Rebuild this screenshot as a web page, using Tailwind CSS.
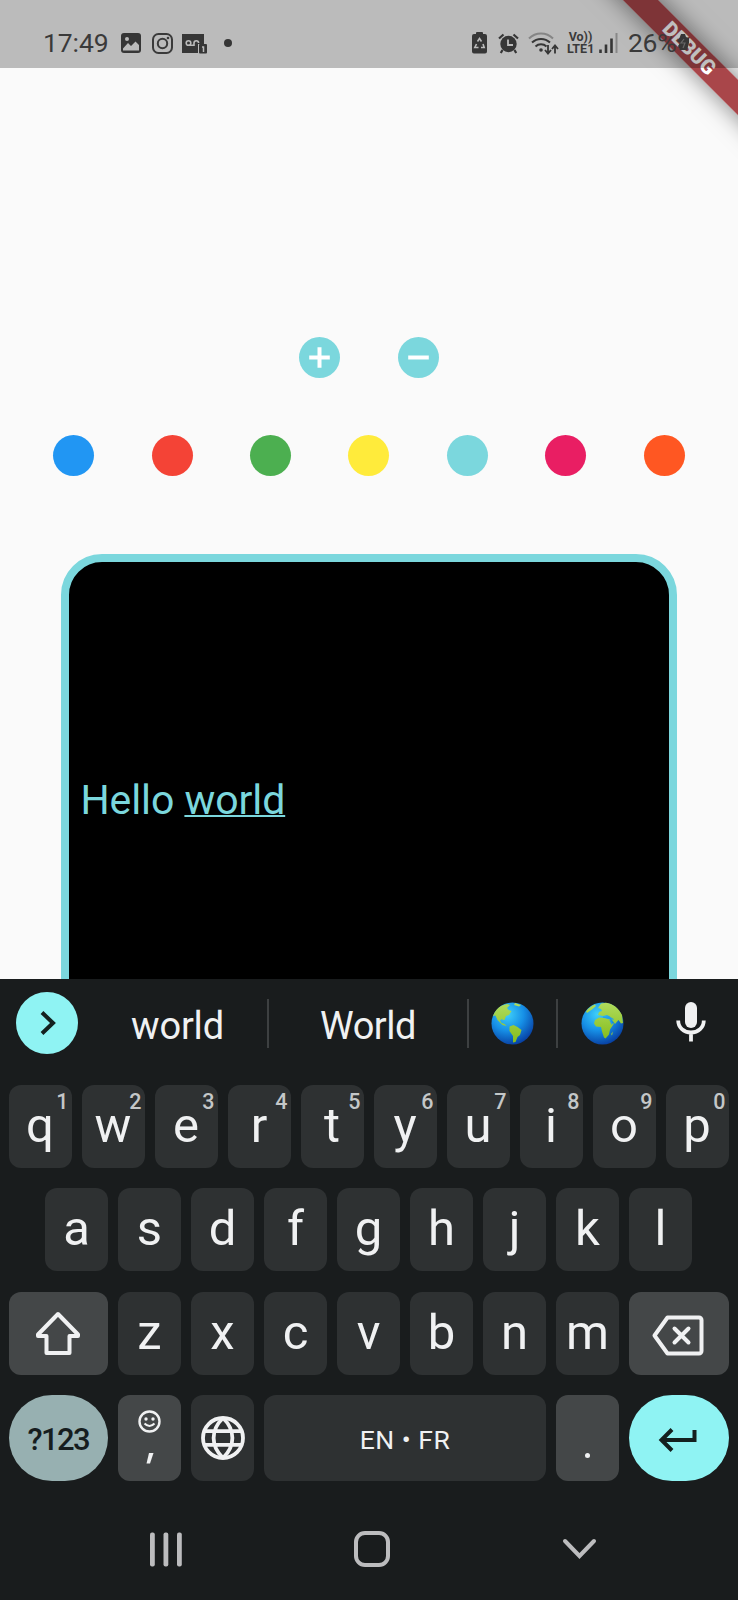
<!DOCTYPE html>
<html lang="en">
<head>
<meta charset="utf-8">
<title>Text editor</title>
<script src="https://cdn.jsdelivr.net/npm/@tailwindcss/browser@4"></script>
</head>
<body class="bg-[#fafafa] font-['Roboto',sans-serif]">
<div class="relative flex h-[1600px] w-[738px] flex-col overflow-hidden bg-[#fafafa]">

  <!-- Debug ribbon -->
  <div class="absolute top-0 right-0 h-[240px] w-[240px] overflow-hidden">
    <div class="absolute top-[36px] left-[61px] flex h-[25px] w-[260px] rotate-45 items-center justify-center bg-[#a03236]/90 text-[20.5px] leading-none font-black text-white shadow-[0_0_24px_rgba(0,0,0,0.5)]">DEBUG</div>
  </div>

  <!-- Status bar -->
  <header class="relative z-10 flex h-[68px] shrink-0 items-center bg-black/25 pt-[18px] pl-[43px] text-[#3a3a3a]">
    <span class="w-[78px] text-[26.5px] leading-[30px] tracking-[-0.1px]">17:49</span>
    <svg class="h-5 w-5" viewBox="0 0 20 20"><rect width="20" height="20" rx="3" fill="#363636"/><circle cx="6" cy="6" r="2" fill="#bbb"/><path d="M2 15.500 7 10l3 3 4.500-4.500L18 12v5.500H2z" fill="#bbb"/></svg>
    <svg class="ml-[11px] h-[21px] w-[21px]" viewBox="0 0 21 21" fill="none" stroke="#3a3a3a" stroke-width="2"><rect x="1" y="1" width="19" height="19" rx="5.500"/><circle cx="10.500" cy="10.500" r="4.700"/><circle cx="16" cy="5" r="1.300" fill="#3a3a3a" stroke="none"/></svg>
    <svg class="ml-[9px] h-[21px] w-[26px]" viewBox="0 0 26 21"><path d="M0 1h22v10h-6v9H0z" fill="#363636"/><g fill="none" stroke="#bbb" stroke-width="1.600"><circle cx="6.500" cy="10" r="2.300"/><path d="M6.500 12.300h5.500V10a2.300 2.300 0 0 1 4.600 0"/></g><rect x="17" y="11" width="8" height="9.500" rx="1" fill="#363636"/><path d="M20 14h1.500v5" fill="none" stroke="#bbb" stroke-width="1.500"/></svg>
    <span class="ml-[16px] h-2 w-2 rounded-full bg-[#363636]"></span>

    <svg class="ml-[240px] h-[22px] w-[15px]" viewBox="0 0 15 22"><path d="M5 0h5q1 0 1 1v1h2a2 2 0 0 1 2 2v15.500a2 2 0 0 1-2 2H2a2 2 0 0 1-2-2V4a2 2 0 0 1 2-2h2V1q0-1 1-1z" fill="#363636"/><path d="M5.500 9.500 7.500 6.500l2 3M11 12l1.200 3.500H9M6.500 15.500H2.800L4.500 12" fill="none" stroke="#bbb" stroke-width="1.600"/></svg>
    <svg class="ml-[11px] h-[21px] w-[21px]" viewBox="0 0 21 21"><circle cx="10.500" cy="11" r="8.200" fill="#363636"/><path d="M1 5.500 5.500 1.500M20 5.500 15.500 1.500M4.500 17 2.800 20M16.500 17l1.700 3" stroke="#363636" stroke-width="2.200"/><path d="M10 6.500V12h5" fill="none" stroke="#bbb" stroke-width="1.800"/></svg>
    <svg class="ml-[9px] h-[23px] w-[31px]" viewBox="0 0 31 23" fill="none" stroke="#363636" stroke-width="2"><path d="M1 6.500a17 17 0 0 1 24 0" stroke="#858585"/><path d="M4 10.500a13 13 0 0 1 18 0M7.500 14.500a8 8 0 0 1 11 0"/><circle cx="13" cy="18" r="1.800" fill="#363636" stroke="none"/><path d="M20 13v8M17 18l3 3.500 3-3.500M27 21.500v-8M24 17l3-3.500 3 3.500" stroke-width="1.800"/></svg>
    <div class="ml-[8px] w-[27px] text-center text-[12.500px] leading-[12px] font-bold whitespace-nowrap"><div>Vo))</div><div>LTE1</div></div>
    <svg class="ml-[5px] h-5 w-[19px]" viewBox="0 0 19 20"><path d="M1.500 16.500V20M7 11.500V20M12.500 5.500V20" stroke="#363636" stroke-width="2.600"/><path d="M17.500 0v20" stroke="#888" stroke-width="2"/></svg>
    <span class="ml-[10px] text-[26.500px] leading-[30px] tracking-[-0.3px]">26%</span>
    <svg class="ml-[1px] h-[18px] w-3" viewBox="0 0 12 18"><path d="M4 0h4l1 3 3 1v5l-2 7H3L1 12l2-3-3-2 3-4z" fill="#363636"/><path d="M7 5 4 9h4l-2 5" fill="none" stroke="#666" stroke-width="1.200"/></svg>
  </header>

  <!-- Editor -->
  <main class="flex h-[910.500px] shrink-0 flex-col overflow-hidden pt-[240px]">
    <div class="flex h-[98.500px] shrink-0 justify-center">
      <div class="flex w-[98.400px] items-center justify-center"><svg class="h-[41px] w-[41px]" viewBox="0 0 41 41"><circle cx="20.500" cy="20.500" r="20.500" fill="#7bd7dd"/><path d="M10.200 20.500h20.600M20.500 10.200v20.600" stroke="#fff" stroke-width="4"/></svg></div>
      <div class="flex w-[98.400px] items-center justify-center"><svg class="h-[41px] w-[41px]" viewBox="0 0 41 41"><circle cx="20.500" cy="20.500" r="20.500" fill="#7bd7dd"/><path d="M10.200 20.500h20.600" stroke="#fff" stroke-width="4"/></svg></div>
    </div>
    <div class="grid h-[98.500px] shrink-0 grid-cols-7 place-items-center px-[24.600px]">
      <span class="h-[41px] w-[41px] rounded-full bg-[#2196f3]"></span>
      <span class="h-[41px] w-[41px] rounded-full bg-[#f44336]"></span>
      <span class="h-[41px] w-[41px] rounded-full bg-[#4caf50]"></span>
      <span class="h-[41px] w-[41px] rounded-full bg-[#ffeb3b]"></span>
      <span class="h-[41px] w-[41px] rounded-full bg-[#7bd7dd]"></span>
      <span class="h-[41px] w-[41px] rounded-full bg-[#e91e63]"></span>
      <span class="h-[41px] w-[41px] rounded-full bg-[#ff5722]"></span>
    </div>
    <div class="mx-[61.400px] mt-[49px] h-[500px] shrink-0 rounded-[41px] border-8 border-[#7bd7dd] bg-black pt-[214px] pl-[11px] text-[41px] leading-[48px] tracking-[-0.080px] text-[#7bd7dd]">Hello <span class="underline decoration-2 underline-offset-[1px] [text-decoration-skip-ink:none]">world</span></div>
  </main>

  <!-- Keyboard -->
  <section class="flex grow flex-col bg-[#191c1d] text-[#f0f1f2]">
    <div class="flex h-[106.500px] shrink-0 items-center pb-[17px] pl-4">
      <div class="flex h-[62px] w-[62px] items-center justify-center rounded-full bg-[#8ff3f3]"><svg class="ml-[1px] h-6 w-4" viewBox="0 0 16 24" fill="none" stroke="#14201f" stroke-width="4"><path d="M2 1.500 13 12 2 22.500"/></svg></div>
      <div class="w-[189px] pt-[5px] pl-[10px] text-center text-[38px] leading-[44px] tracking-[-0.200px]">world</div>
      <div class="h-[49px] w-[2px] bg-[#3d4041]"></div>
      <div class="w-[198px] pt-[5px] text-center text-[38px] leading-[44px] tracking-[-0.500px]">World</div>
      <div class="h-[49px] w-[2px] bg-[#3d4041]"></div>
      <div class="flex w-[87px] justify-center">
        <svg class="h-[43px] w-[43px]" viewBox="0 0 43 43">
          <defs><radialGradient id="sea" cx=".38" cy=".28" r=".78"><stop offset="0" stop-color="#3fd0fa"/><stop offset=".5" stop-color="#168fe6"/><stop offset="1" stop-color="#06389c"/></radialGradient><linearGradient id="land" x2="0" y2="1"><stop offset="0" stop-color="#b0dc5c"/><stop offset="1" stop-color="#86bd1e"/></linearGradient></defs>
          <circle cx="21.500" cy="21.500" r="21" fill="url(#sea)"/>
          <path d="M2 14C3.500 9.500 7 5.500 11 3.500l5-1.500 3 1-3 3 1.500 2 3 1-2.500 4-3 1-1.500 4h-1.500l-1-1-2 1.500 1.500 2.500 3 1 2 2-4-1-5-5-2-4.500zM24 1l6 2-2 1.500-5-1.500zM18.500 24.500l4-1.500 4 2 4 3-1.500 5-2.500 2-2 5-2.500.5V34l-3.500-5z" fill="url(#land)"/>
        </svg>
      </div>
      <div class="h-[49px] w-[2px] bg-[#3d4041]"></div>
      <div class="flex w-[89px] justify-center">
        <svg class="h-[43px] w-[43px]" viewBox="0 0 43 43">
          <circle cx="21.500" cy="21.500" r="21" fill="url(#sea)"/>
          <path d="M5 9.500C7 6.500 10 4 14 2.500l1 1.500-4 3.500-5 3.500zM17 13l1-3 3-1-1-2-3-1 3-4.500L25 .800c7 1 12.500 5 16 12.200l1 8-2 .5-2.500-3.500-3.500 4-3-4-2-3.500-3-1.500-4 1zM14 18l4-2.500 5 .5 6 1.500 1.500 4h2.500l-4 6-1 5-3.500 4-1.500-1-2-6-1-4.500-5-.5-2-3z" fill="url(#land)"/><path d="M22 15.200l8 .800 2.500 1.500M29 18l2 4.500" stroke="#24a0ea" stroke-width="1.200" fill="none"/><path d="M32 29.500l-1 4-1-1.500z" fill="#8bc34a"/>
        </svg>
      </div>
      <div class="flex w-[87px] justify-center"><svg class="-mt-[2px] h-10 w-[30px]" viewBox="0 0 30 40"><rect x="9" width="12" height="26" rx="6" fill="#f0f1f2"/><path d="M2.200 18.500c0 7 5.500 12 12.800 12s12.800-5 12.800-12M15 30v9.500" fill="none" stroke="#f0f1f2" stroke-width="3.800"/></svg></div>
    </div>

    <div class="flex flex-col gap-[20.400px] pr-[9.500px] pl-[8.500px] text-center text-[49px] leading-[81px]">
      <div class="flex h-[83px] gap-[10px]">
        <div class="relative flex-1 rounded-[12px] bg-[#2e3132]">q<sup class="absolute top-[6px] right-[3px] text-[21.500px] leading-[22px] font-medium text-[#c4c7c8]">1</sup></div>
        <div class="relative flex-1 rounded-[12px] bg-[#2e3132]">w<sup class="absolute top-[6px] right-[3px] text-[21.500px] leading-[22px] font-medium text-[#c4c7c8]">2</sup></div>
        <div class="relative flex-1 rounded-[12px] bg-[#2e3132]">e<sup class="absolute top-[6px] right-[3px] text-[21.500px] leading-[22px] font-medium text-[#c4c7c8]">3</sup></div>
        <div class="relative flex-1 rounded-[12px] bg-[#2e3132]">r<sup class="absolute top-[6px] right-[3px] text-[21.500px] leading-[22px] font-medium text-[#c4c7c8]">4</sup></div>
        <div class="relative flex-1 rounded-[12px] bg-[#2e3132]">t<sup class="absolute top-[6px] right-[3px] text-[21.500px] leading-[22px] font-medium text-[#c4c7c8]">5</sup></div>
        <div class="relative flex-1 rounded-[12px] bg-[#2e3132]">y<sup class="absolute top-[6px] right-[3px] text-[21.500px] leading-[22px] font-medium text-[#c4c7c8]">6</sup></div>
        <div class="relative flex-1 rounded-[12px] bg-[#2e3132]">u<sup class="absolute top-[6px] right-[3px] text-[21.500px] leading-[22px] font-medium text-[#c4c7c8]">7</sup></div>
        <div class="relative flex-1 rounded-[12px] bg-[#2e3132]">i<sup class="absolute top-[6px] right-[3px] text-[21.500px] leading-[22px] font-medium text-[#c4c7c8]">8</sup></div>
        <div class="relative flex-1 rounded-[12px] bg-[#2e3132]">o<sup class="absolute top-[6px] right-[3px] text-[21.500px] leading-[22px] font-medium text-[#c4c7c8]">9</sup></div>
        <div class="relative flex-1 rounded-[12px] bg-[#2e3132]">p<sup class="absolute top-[6px] right-[3px] text-[21.500px] leading-[22px] font-medium text-[#c4c7c8]">0</sup></div>
      </div>
      <div class="flex h-[83px] justify-center gap-[10px]">
        <div class="w-[63px] rounded-[12px] bg-[#2e3132]">a</div>
        <div class="w-[63px] rounded-[12px] bg-[#2e3132]">s</div>
        <div class="w-[63px] rounded-[12px] bg-[#2e3132]">d</div>
        <div class="w-[63px] rounded-[12px] bg-[#2e3132]">f</div>
        <div class="w-[63px] rounded-[12px] bg-[#2e3132]">g</div>
        <div class="w-[63px] rounded-[12px] bg-[#2e3132]">h</div>
        <div class="w-[63px] rounded-[12px] bg-[#2e3132]">j</div>
        <div class="w-[63px] rounded-[12px] bg-[#2e3132]">k</div>
        <div class="w-[63px] rounded-[12px] bg-[#2e3132]">l</div>
      </div>
      <div class="flex h-[83px] gap-[10px]">
        <div class="flex flex-1 items-center justify-center rounded-[12px] bg-[#444748]"><svg class="h-[44px] w-[46px]" viewBox="0 0 46 44" fill="none" stroke="#f0f1f2" stroke-width="4" stroke-linejoin="round"><path d="M23 3 43 23.500v1.500H34.500V42h-23V25H3v-1.500z"/></svg></div>
        <div class="w-[63px] rounded-[12px] bg-[#2e3132]">z</div>
        <div class="w-[63px] rounded-[12px] bg-[#2e3132]">x</div>
        <div class="w-[63px] rounded-[12px] bg-[#2e3132]">c</div>
        <div class="w-[63px] rounded-[12px] bg-[#2e3132]">v</div>
        <div class="w-[63px] rounded-[12px] bg-[#2e3132]">b</div>
        <div class="w-[63px] rounded-[12px] bg-[#2e3132]">n</div>
        <div class="w-[63px] rounded-[12px] bg-[#2e3132]">m</div>
        <div class="flex flex-1 items-center justify-center rounded-[12px] bg-[#444748]"><svg class="mt-[4px] ml-[-1px] h-[41px] w-[52px]" viewBox="0 0 52 41" fill="none" stroke="#f0f1f2" stroke-width="4" stroke-linejoin="round"><path d="M15.500 2.500H47a2.500 2.500 0 0 1 2.500 2.500v31a2.500 2.500 0 0 1-2.500 2.500H15.500L2.500 20.500z"/><path d="m22.500 13.500 14 14m0-14-14 14" stroke-linecap="round"/></svg></div>
      </div>
      <div class="flex h-[86px] gap-[10px]">
        <div class="flex w-[99.500px] items-center justify-center rounded-[43px] bg-[#97b0b1] pt-[3px] text-[31px] leading-[36px] font-medium tracking-[-1.600px] text-[#161d1e]">?123</div>
        <div class="flex w-[63px] flex-col items-center rounded-[12px] bg-[#444748] pt-[15px]">
          <svg class="h-[23px] w-[23px] shrink-0" viewBox="0 0 23 23"><circle cx="11.500" cy="11.500" r="10" fill="none" stroke="#f0f1f2" stroke-width="2.400"/><circle cx="8" cy="9" r="1.700" fill="#f0f1f2"/><circle cx="15" cy="9" r="1.700" fill="#f0f1f2"/><path d="M6.500 13.500q5 5 10 0" fill="none" stroke="#f0f1f2" stroke-width="2"/></svg>
          <svg class="mt-5 h-[11px] w-[8px]" viewBox="0 0 8 11" aria-label="comma"><path d="M3 0h4.500L4 10.500H.500z" fill="#f0f1f2"/></svg>
        </div>
        <div class="flex w-[63px] items-center justify-center rounded-[12px] bg-[#2e3132]"><svg class="h-11 w-11" viewBox="0 0 44 44" fill="none" stroke="#f0f1f2" stroke-width="3.800"><circle cx="22" cy="22" r="20"/><path d="M4 15.200h36M4 28.800h36M22 2C9.500 14 9.500 30 22 42M22 2c12.500 12 12.500 28 0 40"/></svg></div>
        <div class="flex flex-1 items-center justify-center rounded-[12px] bg-[#2e3132] pt-[3px] text-[26.500px] leading-[32px] tracking-[0.500px]">EN • FR</div>
        <div class="flex w-[63px] justify-center rounded-[12px] bg-[#444748] pt-[58px]"><span class="h-[5px] w-[5px] rounded-full bg-[#f0f1f2]"></span></div>
        <div class="flex w-[99.500px] items-center justify-center rounded-[43px] bg-[#8ff3f3]"><svg class="mt-[4px] ml-[-1px] h-6 w-[40px]" viewBox="0 0 40 24" fill="none" stroke="#14201f" stroke-width="4"><path d="M14 1.500 3.500 12 14 22.500M3.500 12h33V2"/></svg></div>
      </div>
    </div>

    <!-- System navigation -->
    <nav class="flex items-center pt-[50px] pl-[149px]">
      <svg class="h-[35px] w-[34px]" viewBox="0 0 34 35" fill="#bcbcbe"><rect x="1" y=".500" width="4.800" height="34" rx="2"/><rect x="14.500" y=".500" width="4.800" height="34" rx="2"/><rect x="28" y=".500" width="4.800" height="34" rx="2"/></svg>
      <div class="ml-[171px] h-[36px] w-[36px] rounded-[11px] border-[4.500px] border-[#bcbcbe]"></div>
      <svg class="ml-[172px] h-[22px] w-[36px]" viewBox="0 0 36 22" fill="none" stroke="#bcbcbe" stroke-width="4" stroke-linecap="round"><path d="M3 3 17.500 18 32 3"/></svg>
    </nav>
  </section>
</div>
</body>
</html>
